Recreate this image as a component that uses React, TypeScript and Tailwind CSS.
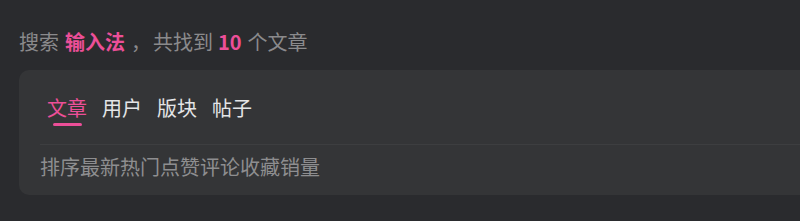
export default function App() {
  const font = { fontFamily: '"Noto Sans CJK SC", "Noto Sans", sans-serif' };
  return (
    <div className="w-[800px] h-[221px] overflow-hidden bg-[#2a2b2e] pl-[19px] pt-[28px]" style={font}>
      <div className="flex text-[20px] leading-[28px] text-[#8a8a8c] whitespace-pre">
        <span>搜索</span>
        <span className="ml-[6px] font-bold text-[#ec4f98]">输入法</span>
        <span className="ml-[6px]">，</span>
        <span className="ml-[2px]">共找到</span>
        <span className="ml-[5px] font-bold text-[#ec4f98]">10</span>
        <span className="ml-[6px]">个文章</span>
      </div>
      <div className="mt-[14px] w-[800px] rounded-[10px] bg-[#343537] pl-[21px]">
        <div className="flex gap-[15px] pl-[7px] pt-[24px] pb-[18px] border-b border-[#3d3e40]">
          <div className="flex flex-col items-center">
            <span className="text-[20px] leading-[28px] text-[#ec4f98]">文章</span>
            <span className="mt-[1px] h-[3px] w-[29px] rounded-full bg-[#ec4f98]" />
          </div>
          <span className="text-[20px] leading-[28px] text-[#e4e5e7]">用户</span>
          <span className="text-[20px] leading-[28px] text-[#e4e5e7]">版块</span>
          <span className="text-[20px] leading-[28px] text-[#e4e5e7]">帖子</span>
        </div>
        <div className="pt-[8px] pb-[14px] text-[20px] leading-[28px] text-[#8e8e90]">
          排序最新热门点赞评论收藏销量
        </div>
      </div>
    </div>
  );
}
